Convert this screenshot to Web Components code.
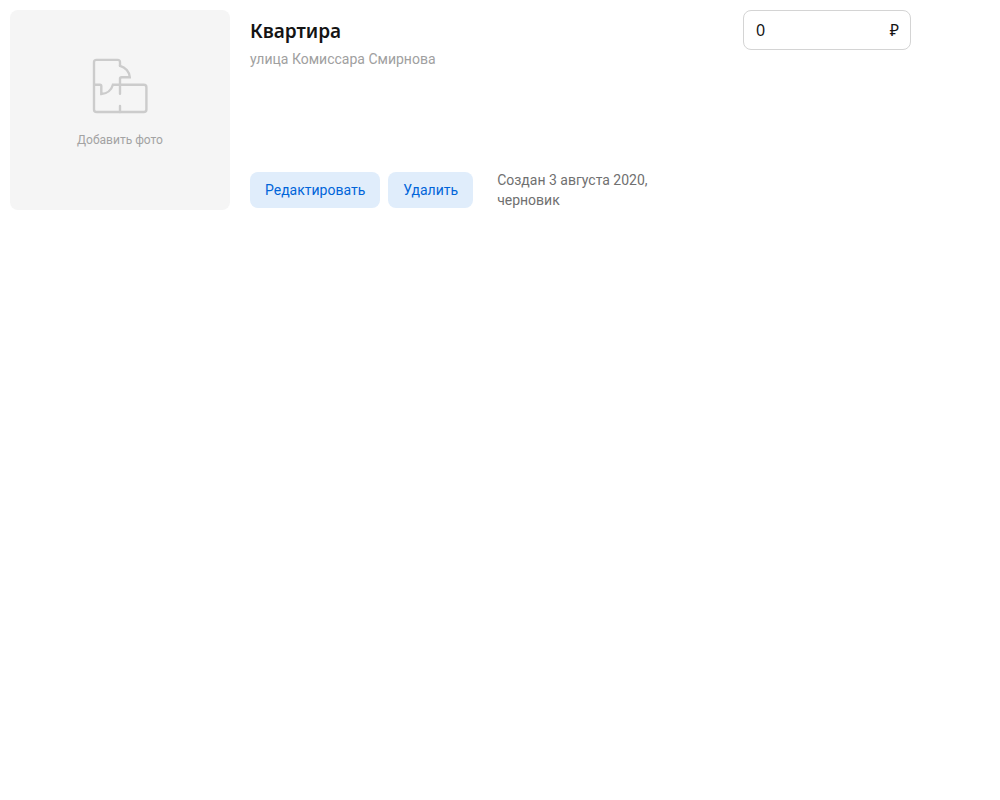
<!DOCTYPE html>
<html lang="ru">
<head>
<meta charset="utf-8">
<meta name="viewport" content="width=device-width, initial-scale=1">
<title>Квартира</title>
<style>
body { margin: 0; padding: 10px; background: #fff; color: #141414; font-family: Roboto, "Noto Sans", sans-serif; }
</style>
</head>
<body>
<offer-card>
  <photo-placeholder slot="photo">Добавить фото</photo-placeholder>
  <span slot="title">Квартира</span>
  <span slot="address">улица Комиссара Смирнова</span>
  <action-button slot="actions">Редактировать</action-button>
  <action-button slot="actions">Удалить</action-button>
  <span slot="status">Создан 3 августа 2020, черновик</span>
  <price-field slot="price" value="0" label="Цена">₽</price-field>
</offer-card>

<script>
function define(name, html, setup) {
  const template = document.createElement('template');
  template.innerHTML = html;
  customElements.define(name, class extends HTMLElement {
    constructor() {
      super();
      this.attachShadow({ mode: 'open' }).append(template.content.cloneNode(true));
    }
    connectedCallback() { if (setup) setup(this); }
  });
}

define('photo-placeholder', `
<style>
:host { display: block; }
button { box-sizing: border-box; width: 100%; height: 200px; padding: 0 0 14px; border: 0; border-radius: 8px;
  background: #f5f5f5; color: #a3a3a3; font: 12px/16px Roboto, sans-serif; cursor: pointer;
  display: flex; flex-direction: column; align-items: center; justify-content: center; gap: 18px; }
svg { display: block; width: 56px; height: 56px; fill: none; stroke: #ccc; stroke-width: 2.4; stroke-linecap: round; }
</style>
<button type="button">
  <svg viewBox="0 0 56 56" aria-hidden="true">
    <path d="M28 7.8V4.2Q28 1.9 25.7 1.9H4.5Q2 1.9 2 4.4V51.4Q2 54 4.6 54H51.8Q54.4 54 54.4 51.4V29.2Q54.4 26.7 51.8 26.7H20.9C19.5 31.8 15.2 35.7 9.3 36V28Q9.3 26.7 8 26.7H2"/>
    <path d="M28 7.8C33.3 9.2 37.6 13.6 37.8 19.3H29.6Q28 19.3 28 20.9V35.7M28 48V54"/>
  </svg>
  <span><slot></slot></span>
</button>`);

define('action-button', `
<style>
:host { display: block; }
button { height: 36px; padding: 0 15px; border: 0; border-radius: 8px; background: #e0edfb; color: #0065d9;
  font: 14px/20px Roboto, sans-serif; white-space: nowrap; cursor: pointer; }
</style>
<button type="button"><slot></slot></button>`);

define('price-field', `
<style>
:host { display: block; }
label { box-sizing: border-box; display: flex; align-items: center; height: 40px; padding: 0 11px 0 12px;
  border: 1px solid #d4d4d4; border-radius: 8px; font: 16px/20px "Noto Sans", sans-serif; }
input { flex: 1; min-width: 0; padding: 0; border: 0; outline: 0; background: none; color: inherit; font: inherit; }
</style>
<label><input type="text" inputmode="numeric"><span><slot></slot></span></label>`, host => {
  const input = host.shadowRoot.querySelector('input');
  input.value = host.getAttribute('value') || '';
  input.setAttribute('aria-label', host.getAttribute('label') || '');
});

define('offer-card', `
<style>
:host { display: block; }
article { display: grid; grid-template-columns: 220px minmax(0, 1fr) 168px; gap: 20px; padding-right: 79px; }
.info { display: flex; flex-direction: column; }
h1 { margin: 7px 0 0; font: 600 19px/28px "Noto Sans", sans-serif; }
p { margin: 4px 0 0; color: #a0a0a0; font: 14px/20px Roboto, sans-serif; }
footer { display: flex; align-items: center; gap: 24px; margin-top: auto; }
.actions { display: flex; gap: 8px; }
.status { max-width: 160px; color: #707070; font: 14px/20px Roboto, sans-serif; }
</style>
<article>
  <slot name="photo"></slot>
  <div class="info">
    <h1><slot name="title"></slot></h1>
    <p><slot name="address"></slot></p>
    <footer>
      <div class="actions"><slot name="actions"></slot></div>
      <div class="status"><slot name="status"></slot></div>
    </footer>
  </div>
  <div><slot name="price"></slot></div>
</article>`);
</script>
</body>
</html>
